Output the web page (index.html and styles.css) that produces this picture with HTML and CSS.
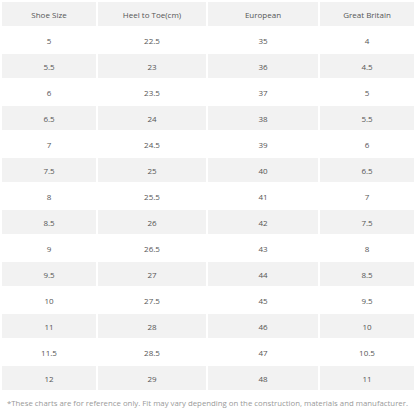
FILE: index.html
```html
<!DOCTYPE html>
<html lang="en">
<head>
  <meta charset="UTF-8" />
  <title>Size Chart</title>
  <link rel="stylesheet" href="styles.css">
</head>
<body>
  <table class="chart">
    <colgroup>
      <col class="c1"><col class="c2"><col class="c3"><col class="c4">
    </colgroup>
    <thead>
      <tr><th>Shoe Size</th><th>Heel to Toe(cm)</th><th>European</th><th>Great Britain</th></tr>
    </thead>
    <tbody>
      <tr><td>5</td><td>22.5</td><td>35</td><td>4</td></tr>
      <tr><td>5.5</td><td>23</td><td>36</td><td>4.5</td></tr>
      <tr><td>6</td><td>23.5</td><td>37</td><td>5</td></tr>
      <tr><td>6.5</td><td>24</td><td>38</td><td>5.5</td></tr>
      <tr><td>7</td><td>24.5</td><td>39</td><td>6</td></tr>
      <tr><td>7.5</td><td>25</td><td>40</td><td>6.5</td></tr>
      <tr><td>8</td><td>25.5</td><td>41</td><td>7</td></tr>
      <tr><td>8.5</td><td>26</td><td>42</td><td>7.5</td></tr>
      <tr><td>9</td><td>26.5</td><td>43</td><td>8</td></tr>
      <tr><td>9.5</td><td>27</td><td>44</td><td>8.5</td></tr>
      <tr><td>10</td><td>27.5</td><td>45</td><td>9.5</td></tr>
      <tr><td>11</td><td>28</td><td>46</td><td>10</td></tr>
      <tr><td>11.5</td><td>28.5</td><td>47</td><td>10.5</td></tr>
      <tr><td>12</td><td>29</td><td>48</td><td>11</td></tr>
    </tbody>
  </table>
  <p class="note">*These charts are for reference only. Fit may vary depending on the construction, materials and manufacturer.</p>
</body>
</html>
```

FILE: styles.css
```css
body {
  margin: 0;
  font-family: "Open Sans", sans-serif;
  color: #555;
  background: #fff;
}
.chart {
  width: 416px;
  border-spacing: 2px;
  table-layout: fixed;
}
.c1 { width: 94px; }
.c2 { width: 108px; }
.c3 { width: 110px; }
.c4 { width: 94px; }
.chart th,
.chart td {
  height: 24px;
  padding: 0;
  text-align: center;
  font-size: 8px;
  font-weight: normal;
}
.chart thead tr,
.chart tbody tr:nth-child(even) {
  background-color: #f2f2f2;
}
.note {
  margin: 6px 0 0 7px;
  font-size: 7.8px;
  line-height: 11px;
  color: #999;
  white-space: nowrap;
}
```
